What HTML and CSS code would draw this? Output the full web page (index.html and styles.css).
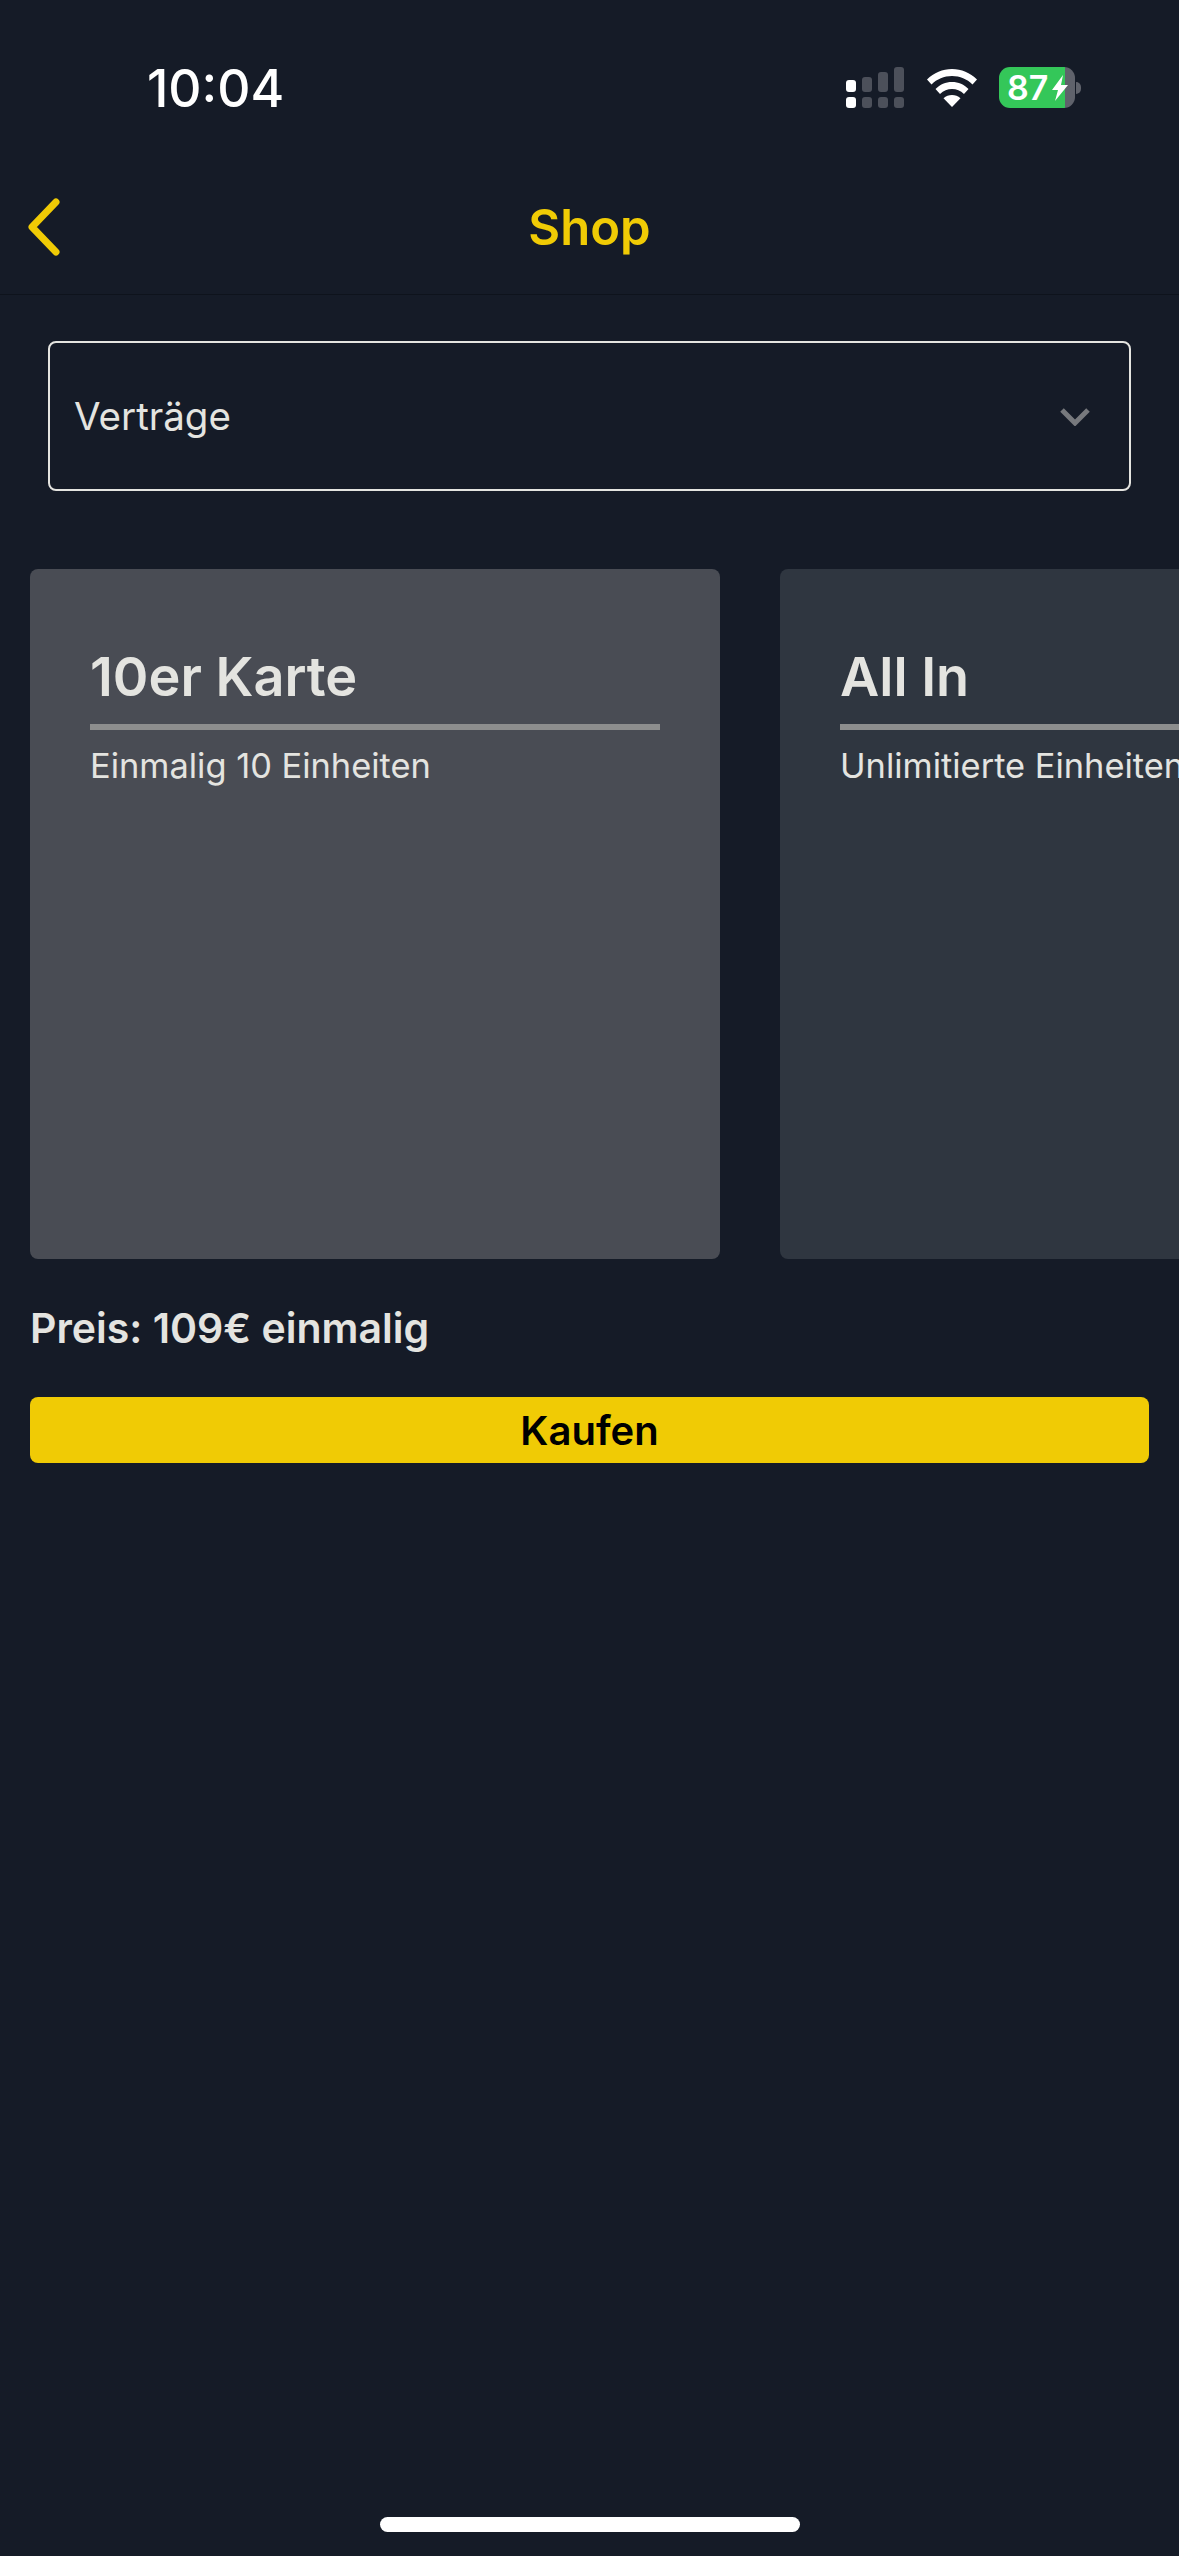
FILE: index.html
```html
<!DOCTYPE html>
<html lang="de">
<head>
    <meta charset="UTF-8">
    <meta name="viewport" content="width=device-width, initial-scale=1.0">
    <title>Shop</title>
    <link rel="stylesheet" href="styles.css">
</head>
<body>
    <div class="screen">
        <div class="status-bar">
            <span class="time">10:04</span>
            <div class="status-icons">
                <svg class="signal" width="58" height="41" viewBox="0 0 58 41">
                    <rect x="0" y="13" width="10" height="12" rx="3" fill="#fff"/>
                    <rect x="0" y="30" width="10" height="11" rx="3" fill="#fff"/>
                    <rect x="16" y="10" width="10" height="15" rx="3" fill="#4c505a"/>
                    <rect x="16" y="30" width="10" height="11" rx="3" fill="#4c505a"/>
                    <rect x="32" y="5" width="10" height="20" rx="3" fill="#4c505a"/>
                    <rect x="32" y="30" width="10" height="11" rx="3" fill="#4c505a"/>
                    <rect x="48" y="0" width="10" height="25" rx="3" fill="#4c505a"/>
                    <rect x="48" y="30" width="10" height="11" rx="3" fill="#4c505a"/>
                </svg>
                <svg class="wifi" width="50" height="38" viewBox="0 0 50 38">
                    <path d="M25 0C15.500 0 7 3.700 0 10.500L4.500 15.500C10 10 17 7 25 7S40 10 45.500 15.500L50 10.500C43 3.700 34.500 0 25 0Z" fill="#fff"/>
                    <path d="M25 13C18.500 13 13 15.500 8.500 20L13 25C16.500 21.800 20.500 20 25 20S33.500 21.800 37 25L41.500 20C37 15.500 31.500 13 25 13Z" fill="#fff"/>
                    <path d="M25 26C21.800 26 19 27 16.500 29.300L25 38L33.500 29.300C31 27 28.200 26 25 26Z" fill="#fff"/>
                </svg>
                <div class="battery">
                    <div class="battery-body">
                        <span class="battery-level">87</span>
                        <svg class="bolt" width="16" height="26" viewBox="0 0 16 26">
                            <path d="M11 0L0 15H6L3 26L16 10H9Z" fill="#fff"/>
                        </svg>
                    </div>
                    <div class="battery-nub"></div>
                </div>
            </div>
        </div>

        <header class="nav">
            <svg class="back" width="32" height="58" viewBox="0 0 32 58">
                <path d="M28 4L4 29L28 54" fill="none" stroke="#f0cb05" stroke-width="7" stroke-linecap="round" stroke-linejoin="round"/>
            </svg>
            <h1>Shop</h1>
        </header>

        <main class="content">
            <div class="select">
                <span>Verträge</span>
                <svg width="32" height="19" viewBox="0 0 32 19">
                    <path d="M3 3L16 16L29 3" fill="none" stroke="#77797d" stroke-width="5"/>
                </svg>
            </div>

            <div class="cards">
                <div class="card card-active">
                    <h2>10er Karte</h2>
                    <p>Einmalig 10 Einheiten</p>
                </div>
                <div class="card">
                    <h2>All In</h2>
                    <p>Unlimitierte Einheiten</p>
                </div>
            </div>

            <div class="price">Preis: 109€ einmalig</div>
            <button class="buy" type="button">Kaufen</button>
        </main>

        <div class="home-bar"></div>
    </div>
</body>
</html>
```

FILE: styles.css
```css
body {
    margin: 0;
    padding: 0;
    background-color: #151b27;
    font-family: Inter, "Liberation Sans", sans-serif;
}

.screen {
    width: 1179px;
    height: 2556px;
    display: flex;
    flex-direction: column;
    overflow: hidden;
}

.status-bar {
    height: 110px;
    padding: 67px 98px 0 147px;
    box-sizing: border-box;
    display: flex;
    justify-content: space-between;
    align-items: flex-start;
}

.time {
    margin-top: 1px;
    color: #fff;
    font-size: 51.500px;
    font-weight: 500;
    line-height: 41px;
}

.status-icons {
    display: flex;
    align-items: flex-start;
}

.signal {
    margin-right: 23px;
}

.wifi {
    margin-top: 2px;
    margin-right: 22px;
}

.battery {
    display: flex;
    align-items: center;
}

.battery-body {
    width: 76px;
    height: 41px;
    border-radius: 11px;
    background: linear-gradient(to right, #34c759 86.500%, #5f626b 86.500%);
    display: flex;
    align-items: center;
    padding-left: 8px;
    box-sizing: border-box;
}

.battery-level {
    color: #fff;
    font-size: 34px;
    font-weight: 600;
    line-height: 41px;
}

.bolt {
    margin-left: 4px;
}

.battery-nub {
    width: 5px;
    height: 12px;
    margin-left: 1px;
    background-color: #5f626b;
    border-radius: 0 6px 6px 0;
}

.nav {
    height: 184px;
    border-bottom: 1px solid #0e131c;
    display: flex;
    align-items: center;
    justify-content: center;
    position: relative;
}

.back {
    position: absolute;
    left: 28px;
    top: 88px;
}

h1 {
    margin: 0;
    color: #f0cb05;
    font-size: 49px;
    font-weight: 600;
    padding-top: 50px;
}

.content {
    display: flex;
    flex-direction: column;
}

.select {
    width: 1083px;
    height: 150px;
    margin: 46px 0 0 48px;
    padding: 0 38px 0 24px;
    box-sizing: border-box;
    border: 2px solid #e4e4e0;
    border-radius: 8px;
    display: flex;
    align-items: center;
    justify-content: space-between;
    color: #e4e4e0;
    font-size: 38.500px;
}

.cards {
    display: flex;
    gap: 60px;
    margin: 78px 0 0 30px;
}

.card {
    flex: none;
    width: 690px;
    height: 690px;
    padding: 74px 60px 0;
    box-sizing: border-box;
    border-radius: 8px;
    background-color: #2f3640;
    color: #e4e4e0;
}

.card-active {
    background-color: #494c54;
}

.card h2 {
    margin: 0;
    height: 81px;
    border-bottom: 6px solid #8d8e8e;
    font-size: 54px;
    font-weight: 600;
    line-height: 67px;
}

.card p {
    margin: 14px 0 0;
    font-size: 34.400px;
    line-height: 44px;
    white-space: nowrap;
}

.price {
    margin: 44px 0 0 30px;
    color: #e4e4e0;
    font-size: 41px;
    font-weight: 600;
    line-height: 50px;
}

.buy {
    width: 1119px;
    height: 66px;
    margin: 44px 0 0 30px;
    padding: 0;
    border: none;
    border-radius: 8px;
    background-color: #f0cb05;
    color: #000;
    font-family: inherit;
    font-size: 40px;
    font-weight: 600;
}

.home-bar {
    width: 420px;
    height: 15px;
    margin: auto auto 24px;
    border-radius: 8px;
    background-color: #fff;
}
```
